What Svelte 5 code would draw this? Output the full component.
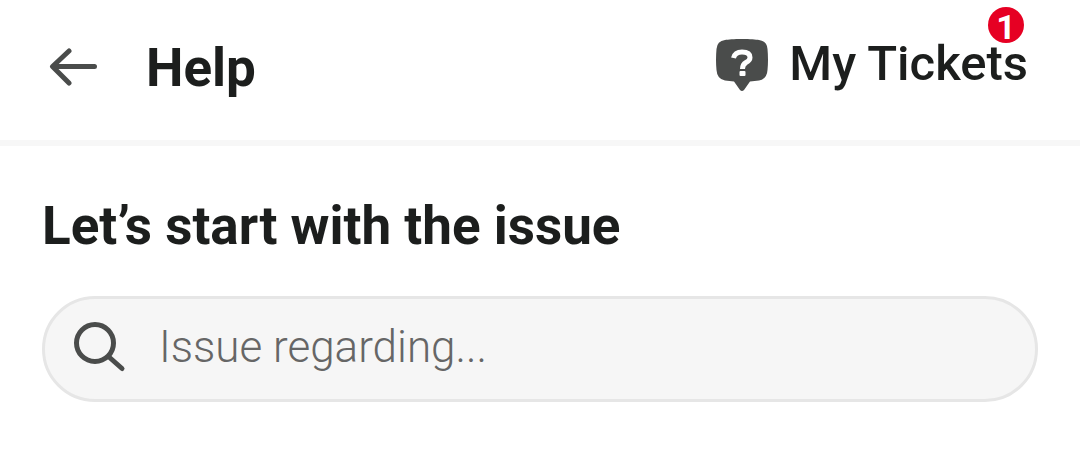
<script lang="ts">
	let query = '';
	let ticketCount = 1;
</script>

<header>
	<button class="back" type="button" aria-label="Back">
		<svg width="50" height="40" viewBox="0 0 50 40">
			<path d="M46.500 18.500H5M21 3 4.500 18.500 21 35" />
		</svg>
	</button>
	<h1>Help</h1>

	<a class="tickets" href="#tickets">
		<svg width="54" height="54" viewBox="0 0 54 54">
			<path
				class="bubble"
				d="M27 2C35 2 41 2.500 44 3Q52 4 52.500 12Q53.500 23 52.500 33Q52 42 44 43.500L35 44.500 29 53Q27 55 25 53L19 44.500 10 43.500Q2 42 1.500 33Q.5 23 1.500 12Q2 4 10 3C13 2.500 19 2 27 2Z"
			/>
			<path class="hook" d="M18.500 21Q20 15 27 15Q35 15 35 20.500Q35 23.500 31 25.500Q27.500 27.500 27.500 32" />
			<rect class="dot" x="24.500" y="34" width="6" height="5" rx="1" />
		</svg>
		<span>My Tickets</span>
		<span class="badge">{ticketCount}</span>
	</a>
</header>

<main>
	<h2><label for="issue">Let’s start with the issue</label></h2>

	<div class="search">
		<svg width="54" height="54" viewBox="0 0 54 54">
			<circle cx="22" cy="21" r="18.500" />
			<path d="M36 35 49 46.500" />
		</svg>
		<input id="issue" type="text" placeholder="Issue regarding..." bind:value={query} />
	</div>
</main>

<style>
	:global(body) {
		margin: 0;
		background: #fff;
		color: #1c1e1d;
		font-family: Roboto, 'Liberation Sans', sans-serif;
	}

	svg {
		display: block;
		flex: none;
		fill: none;
		stroke: #4a4c4b;
		stroke-width: 5;
		stroke-linecap: round;
		stroke-linejoin: round;
	}

	header {
		display: flex;
		align-items: center;
		padding: 32px 52px 36px 48px;
		border-bottom: 6px solid #f7f7f7;
	}

	.back {
		padding: 0;
		border: 0;
		background: none;
		cursor: pointer;
	}

	h1,
	h2 {
		margin: 0;
		font-size: 53px;
		font-weight: 700;
		line-height: 72px;
	}

	h1 {
		margin-left: 48px;
	}

	.tickets {
		position: relative;
		display: flex;
		align-items: center;
		gap: 20px;
		margin-left: auto;
		padding-bottom: 8px;
		color: inherit;
		font-size: 49px;
		font-weight: 500;
		line-height: 56px;
		text-decoration: none;
	}

	.bubble {
		fill: #4a4c4b;
		stroke: none;
	}

	.hook {
		stroke: #fff;
		stroke-linecap: butt;
	}

	.dot {
		fill: #fff;
		stroke: none;
	}

	.badge {
		position: absolute;
		top: -29px;
		right: 4px;
		width: 36px;
		height: 36px;
		border-radius: 50%;
		background: #e60023;
		color: #fff;
		font-size: 34px;
		font-weight: 700;
		line-height: 40px;
		text-align: center;
	}

	main {
		padding: 44px 42px;
	}

	.search {
		display: flex;
		align-items: center;
		gap: 32px;
		margin-top: 34px;
		padding: 0 28px;
		border: 3px solid #e6e6e6;
		border-radius: 53px;
		background: #f6f6f6;
	}

	input {
		flex: 1;
		min-width: 0;
		height: 96px;
		padding: 0 0 4px;
		border: 0;
		outline: 0;
		background: none;
		color: inherit;
		font: 300 44px Roboto, 'Liberation Sans', sans-serif;
	}

	input::placeholder {
		color: #666;
		opacity: 1;
	}
</style>
